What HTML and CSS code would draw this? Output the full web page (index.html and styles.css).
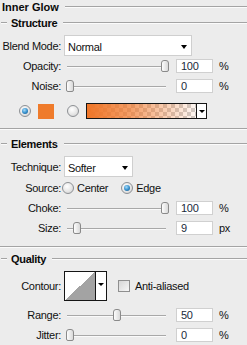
FILE: index.html
```html
<!DOCTYPE html>
<html>
<head>
<meta charset="utf-8">
<link rel="stylesheet" href="styles.css">
</head>
<body>
<div class="panel">
  <div class="title"><span class="title-text">Inner Glow</span><span class="rule"></span></div>

  <section class="group">
    <div class="group-head"><span class="rule short"></span><span class="group-title">Structure</span><span class="rule"></span></div>
    <div class="row row-select">
      <span class="lbl">Blend Mode:</span>
      <div class="select select-blend"><span>Normal</span><i class="caret"></i></div>
    </div>
    <div class="row">
      <span class="lbl">Opacity:</span>
      <div class="ctl">
        <div class="slider"><div class="track"></div><div class="thumb" style="left:97px"></div></div>
        <div class="num">100</div><span class="unit">%</span>
      </div>
    </div>
    <div class="row">
      <span class="lbl">Noise:</span>
      <div class="ctl">
        <div class="slider"><div class="track"></div><div class="thumb" style="left:2px"></div></div>
        <div class="num">0</div><span class="unit">%</span>
      </div>
    </div>
    <div class="color-row">
      <span class="radio checked"></span>
      <span class="swatch"></span>
      <span class="radio"></span>
      <div class="gradient"><span class="grad-fill"></span><span class="grad-arrow"><i class="caret small"></i></span></div>
    </div>
  </section>
  <div class="sep"></div>

  <section class="group">
    <div class="group-head head-elements"><span class="rule short"></span><span class="group-title">Elements</span><span class="rule"></span></div>
    <div class="row row-select">
      <span class="lbl">Technique:</span>
      <div class="select select-tech"><span>Softer</span><i class="caret"></i></div>
    </div>
    <div class="row row-source">
      <span class="lbl">Source:</span>
      <div class="ctl radios">
        <span class="radio"></span><span class="opt">Center</span>
        <span class="radio checked second"></span><span class="opt">Edge</span>
      </div>
    </div>
    <div class="row">
      <span class="lbl">Choke:</span>
      <div class="ctl">
        <div class="slider"><div class="track"></div><div class="thumb" style="left:97px"></div></div>
        <div class="num">100</div><span class="unit">%</span>
      </div>
    </div>
    <div class="row">
      <span class="lbl">Size:</span>
      <div class="ctl">
        <div class="slider"><div class="track"></div><div class="thumb" style="left:9px"></div></div>
        <div class="num">9</div><span class="unit">px</span>
      </div>
    </div>
  </section>
  <div class="sep sep-quality"></div>

  <section class="group">
    <div class="group-head head-quality"><span class="rule short"></span><span class="group-title">Quality</span><span class="rule"></span></div>
    <div class="row row-contour">
      <span class="lbl">Contour:</span>
      <div class="ctl">
        <div class="contour"><span class="contour-preview"></span><span class="contour-arrow"><i class="caret small"></i></span></div>
        <span class="checkbox"></span><span class="opt">Anti-aliased</span>
      </div>
    </div>
    <div class="row">
      <span class="lbl">Range:</span>
      <div class="ctl">
        <div class="slider"><div class="track"></div><div class="thumb" style="left:49px"></div></div>
        <div class="num">50</div><span class="unit">%</span>
      </div>
    </div>
    <div class="row">
      <span class="lbl">Jitter:</span>
      <div class="ctl">
        <div class="slider"><div class="track"></div><div class="thumb" style="left:2px"></div></div>
        <div class="num">0</div><span class="unit">%</span>
      </div>
    </div>
  </section>
</div>
</body>
</html>
```

FILE: styles.css
```css
html, body {
  margin: 0;
  padding: 0;
}
body {
  width: 247px;
  height: 345px;
  overflow: hidden;
  background: #ececec;
  font-family: "Liberation Sans", Arial, sans-serif;
  font-size: 11px;
  letter-spacing: -0.3px;
  color: #111;
}
.panel {
  width: 247px;
}

/* headings */
.title {
  display: flex;
  align-items: center;
  height: 14px;
  padding-left: 2px;
}
.title-text,
.group-title {
  font-weight: bold;
  color: #0a0a0a;
}
.title-text { letter-spacing: 0; }
.rule {
  flex: 1;
  height: 0;
  border-top: 1px solid #a4a4a4;
  border-bottom: 1px solid #fbfbfb;
  margin-left: 6px;
}
.rule.short {
  flex: none;
  width: 6px;
  margin-left: 1px;
  margin-right: 4px;
}
.group-head {
  display: flex;
  align-items: center;
  height: 16px;
  margin-top: 1px;
}
.head-elements { margin-top: 6px; }
.head-quality { margin-top: 3px; }

.sep {
  height: 0;
  border-top: 1px solid #a4a4a4;
  border-bottom: 1px solid #fbfbfb;
  margin-top: 8px;
}

/* rows */
.row {
  display: grid;
  grid-template-columns: 61px 1fr;
  column-gap: 3px;
  align-items: center;
  height: 20px;
}
.row-select {
  height: 21px;
  margin-top: 4px;
}
.row-source { height: 21px; }
.row-contour {
  height: 30px;
  margin-top: 4px;
  margin-bottom: 4px;
}
.lbl {
  text-align: right;
  white-space: nowrap;
}
.ctl {
  display: flex;
  align-items: center;
}

/* select */
.select {
  position: relative;
  box-sizing: border-box;
  height: 21px;
  background: #fff;
  border: 1px solid #cfcfcf;
  display: flex;
  align-items: center;
  padding: 2px 0 0 3px;
}
.select-blend { width: 128px; }
.select-tech { width: 69px; }
.caret {
  display: block;
  width: 0;
  height: 0;
  border-left: 3px solid transparent;
  border-right: 3px solid transparent;
  border-top: 4px solid #000;
}
.select .caret {
  margin-left: auto;
  margin-right: 4px;
}
.caret.small {
  border-left-width: 3px;
  border-right-width: 3px;
  border-top-width: 3px;
}

/* slider */
.slider {
  position: relative;
  width: 106px;
  height: 14px;
  display: flex;
  align-items: center;
}
.track {
  margin-left: 3px;
  margin-top: 2px;
  width: 99px;
  height: 0;
  border-top: 1px solid #a8a8a8;
  border-bottom: 1px solid #fafafa;
}
.thumb {
  position: absolute;
  top: 1px;
  box-sizing: border-box;
  width: 8px;
  height: 12px;
  border: 1px solid #8a8a8a;
  border-radius: 3px 3px 2px 2px;
  background: linear-gradient(to right, #fdfdfd, #d9d9d9);
}
.num {
  box-sizing: border-box;
  width: 37px;
  height: 14px;
  margin-left: 6px;
  background: #fff;
  border: 1px solid #d0d0d0;
  padding-left: 4px;
  line-height: 13px;
  color: #1a2a3a;
}
.unit {
  margin-left: 6px;
}

/* colour row */
.color-row {
  display: flex;
  align-items: center;
  height: 18px;
  margin-top: 6px;
  padding-left: 19px;
}
.radio {
  position: relative;
  box-sizing: border-box;
  flex: none;
  width: 12px;
  height: 12px;
  border-radius: 50%;
  border: 1px solid #8d9094;
  background: radial-gradient(circle at 40% 35%, #ffffff 0%, #e6e6e6 55%, #c9c9c9 100%);
}
.radio.checked::after {
  content: "";
  position: absolute;
  left: 2px;
  top: 2px;
  width: 6px;
  height: 6px;
  border-radius: 50%;
  background: radial-gradient(circle at 40% 35%, #a8dcf8 0%, #3a93cf 50%, #0f4f80 100%);
}
.swatch {
  flex: none;
  width: 16px;
  height: 15px;
  margin-left: 7px;
  margin-right: 13px;
  background: #ef7b2b;
}
.gradient {
  box-sizing: border-box;
  flex: none;
  display: flex;
  width: 121px;
  height: 16px;
  margin-left: 7px;
  border: 1px solid #151515;
}
.grad-fill {
  flex: 1;
  background:
    linear-gradient(to right, rgba(240, 118, 40, 1) 0%, rgba(240, 118, 40, 0.7) 40%, rgba(240, 118, 40, 0.05) 100%),
    repeating-conic-gradient(#cfcfcf 0% 25%, #ffffff 0% 50%) 0 0 / 8px 8px;
}
.grad-arrow {
  flex: none;
  width: 9px;
  border-left: 1px solid #151515;
  background: #fff;
  display: flex;
  align-items: center;
  justify-content: center;
}

/* source radios */
.radios { margin-left: -2px; }
.opt { margin-left: 3px; white-space: nowrap; }
.radio.second { margin-left: 13px; }

/* contour */
.contour {
  box-sizing: border-box;
  display: flex;
  width: 43px;
  height: 30px;
  border: 1px solid #151515;
  background: #fff;
}
.contour-preview {
  flex: 1;
  background: linear-gradient(to top left, #a3a3a3 50%, #ffffff 50%);
}
.contour-arrow {
  flex: none;
  width: 10px;
  border-left: 1px solid #151515;
  display: flex;
  align-items: center;
  justify-content: center;
  padding-bottom: 4px;
}
.checkbox {
  box-sizing: border-box;
  flex: none;
  width: 12px;
  height: 12px;
  margin-left: 11px;
  border: 1px solid #8f8f8f;
  background: linear-gradient(135deg, #d6d6d6, #f7f7f7);
}
.checkbox + .opt { margin-left: 5px; }
```
